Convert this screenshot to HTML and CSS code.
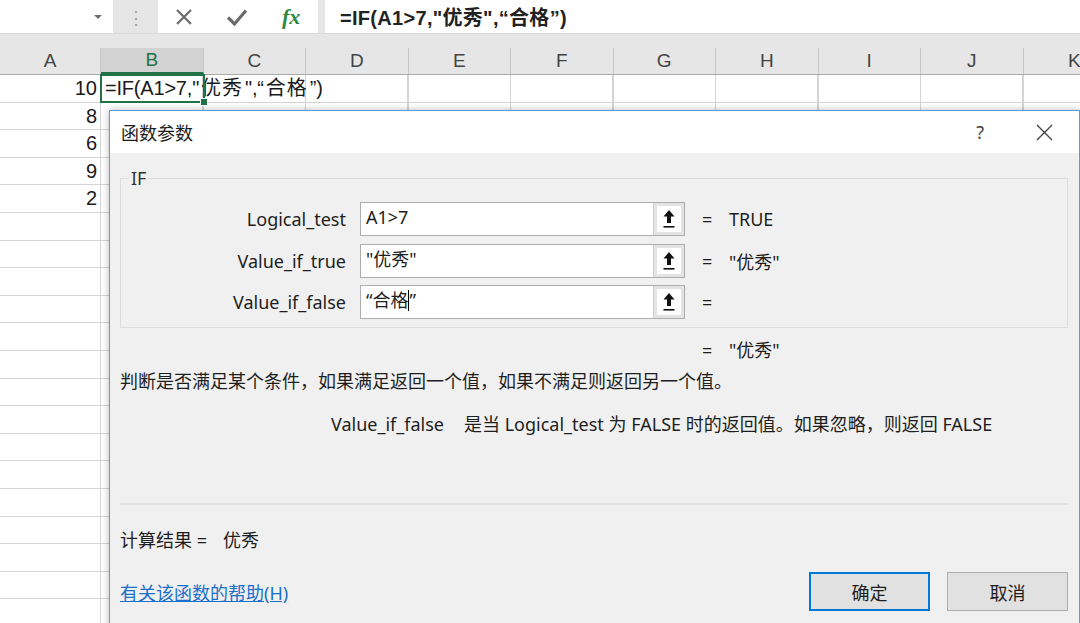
FILE: index.html
```html
<!DOCTYPE html>
<html lang="zh-CN">
<head>
<meta charset="utf-8">
<title>函数参数</title>
<link rel="stylesheet" href="styles.css">
</head>
<body>
<div class="app">
  <div class="fbar">
    <div class="namebox"><span class="dd"></span></div>
    <div class="grip">⋮</div>
    <div class="fbtns">
      <svg class="ico" width="20" height="20" viewBox="0 0 20 20"><path d="M3 3L17 17M17 3L3 17" stroke="#6b6b6b" stroke-width="2.2" fill="none"/></svg>
      <svg class="ico" width="22" height="20" viewBox="0 0 22 20"><path d="M2 10.5L8.5 17L20 3.5" stroke="#6b6b6b" stroke-width="3.2" fill="none"/></svg>
      <span class="fx">fx</span>
    </div>
    <div class="finput">=IF(A1&gt;7,"优秀",“合格”)</div>
  </div>
  <div class="fgap"></div>
  <div class="hdr">
    <div class="hc">A</div><div class="hc on">B</div><div class="hc">C</div><div class="hc">D</div><div class="hc">E</div><div class="hc">F</div><div class="hc">G</div><div class="hc">H</div><div class="hc">I</div><div class="hc">J</div><div class="hc">K</div>
  </div>
  <div class="rows">
    <div class="row"><div class="ca">10</div><div class="cb sel"><span class="ct">=IF(A1&gt;7,"<span class="cj">优秀</span>",“<span class="cj">合格</span>”)</span></div></div>
    <div class="row"><div class="ca">8</div><div class="cb"></div></div>
    <div class="row"><div class="ca">6</div><div class="cb"></div></div>
    <div class="row"><div class="ca">9</div><div class="cb"></div></div>
    <div class="row"><div class="ca">2</div><div class="cb"></div></div>
    <div class="row"><div class="ca"></div><div class="cb"></div></div>
    <div class="row"><div class="ca"></div><div class="cb"></div></div>
    <div class="row"><div class="ca"></div><div class="cb"></div></div>
    <div class="row"><div class="ca"></div><div class="cb"></div></div>
    <div class="row"><div class="ca"></div><div class="cb"></div></div>
    <div class="row"><div class="ca"></div><div class="cb"></div></div>
    <div class="row"><div class="ca"></div><div class="cb"></div></div>
    <div class="row"><div class="ca"></div><div class="cb"></div></div>
    <div class="row"><div class="ca"></div><div class="cb"></div></div>
    <div class="row"><div class="ca"></div><div class="cb"></div></div>
    <div class="row"><div class="ca"></div><div class="cb"></div></div>
    <div class="row"><div class="ca"></div><div class="cb"></div></div>
    <div class="row"><div class="ca"></div><div class="cb"></div></div>
    <div class="row"><div class="ca"></div><div class="cb"></div></div>
    <div class="row"><div class="ca"></div><div class="cb"></div></div>
  </div>

  <div class="dialog">
    <div class="dtitle">
      <span class="dname">函数参数</span>
      <span class="qm">?</span>
      <svg class="dclose" width="17" height="17" viewBox="0 0 17 17"><path d="M1 1L16 16M16 1L1 16" stroke="#444" stroke-width="1.4" fill="none"/></svg>
    </div>
    <div class="dbody">
      <fieldset class="grp">
        <legend>IF</legend>
        <div class="arg">
          <span class="lbl">Logical_test</span>
          <div class="inp"><span class="txt">A1&gt;7</span><span class="pick"><i><svg width="12" height="20" viewBox="0 0 12 20"><path d="M6 1L11.5 7.5H8V14H4V7.5H0.5Z" fill="#111"/><rect x="0.5" y="17" width="11" height="1.6" fill="#111"/></svg></i></span></div>
          <span class="eq">=</span><span class="val">TRUE</span>
        </div>
        <div class="arg">
          <span class="lbl">Value_if_true</span>
          <div class="inp"><span class="txt">"优秀"</span><span class="pick"><i><svg width="12" height="20" viewBox="0 0 12 20"><path d="M6 1L11.5 7.5H8V14H4V7.5H0.5Z" fill="#111"/><rect x="0.5" y="17" width="11" height="1.6" fill="#111"/></svg></i></span></div>
          <span class="eq">=</span><span class="val">"优秀"</span>
        </div>
        <div class="arg">
          <span class="lbl">Value_if_false</span>
          <div class="inp"><span class="txt">“合格<span class="caret"></span>”</span><span class="pick"><i><svg width="12" height="20" viewBox="0 0 12 20"><path d="M6 1L11.5 7.5H8V14H4V7.5H0.5Z" fill="#111"/><rect x="0.5" y="17" width="11" height="1.6" fill="#111"/></svg></i></span></div>
          <span class="eq">=</span><span class="val"></span>
        </div>
      </fieldset>
      <div class="result"><span class="eq">=</span><span class="val">"优秀"</span></div>
      <p class="desc">判断是否满足某个条件，如果满足返回一个值，如果不满足则返回另一个值。</p>
      <p class="detail"><span class="dk">Value_if_false</span><span>是当 Logical_test 为 FALSE 时的返回值。如果忽略，则返回 FALSE</span></p>
      <div class="sep"></div>
      <p class="calc">计算结果 =<span class="cv">优秀</span></p>
      <div class="foot">
        <a class="help" href="#">有关该函数的帮助(H)</a>
        <div class="btns">
          <button class="btn ok">确定</button>
          <button class="btn">取消</button>
        </div>
      </div>
    </div>
  </div>
</div>
</body>
</html>
```

FILE: styles.css
```css
* { box-sizing: border-box; }
html, body { margin: 0; padding: 0; overflow: hidden; }
body { font-family: "Noto Sans", "Noto Sans CJK SC", sans-serif; background: #fff; color: #1e1e1e; }

.app { position: relative; width: 1080px; height: 623px; overflow: hidden; background: #fff; }

/* formula bar */
.fbar { display: flex; height: 33px; background: #e6e6e6; }
.namebox { width: 113px; background: #fff; display: flex; align-items: center; justify-content: flex-end; padding-right: 11px; }
.dd { width: 0; height: 0; border-left: 4px solid transparent; border-right: 4px solid transparent; border-top: 4px solid #707070; }
.grip { width: 45px; display: flex; align-items: center; justify-content: center; color: #a0a0a0; font-size: 18px; }
.fbtns { width: 160px; background: #fff; display: flex; align-items: center; padding-left: 16px; gap: 32px; }
.fx { font-family: "Liberation Serif", serif; font-style: italic; font-weight: bold; color: #2d8a43; font-size: 22px; line-height: 1; margin-left: 2px; }
.finput { flex: 1; background: #fff; margin-left: 7px; padding-left: 15px; display: flex; align-items: center; font-family: "Liberation Sans", "Noto Sans CJK SC", sans-serif; font-weight: bold; font-size: 20px; color: #222; letter-spacing: 0.3px; }
.fgap { height: 15px; background: #e6e6e6; border-top: 1px solid #d9d9d9; }

/* column headers */
.hdr { display: grid; grid-template-columns: 101px repeat(10, 102.5px); height: 27px; background: #e6e6e6; border-bottom: 1px solid #a9a9a9; width: 1130px; }
.hc { border-right: 1px solid #c6c6c6; display: flex; align-items: center; justify-content: center; font-family: "Liberation Sans", sans-serif; font-size: 19px; color: #444; }
.hc.on { background: #d2d2d2; color: #217346; border-bottom: 2px solid #217346; }

/* grid rows */
.rows {
  background-image: repeating-linear-gradient(90deg, #d4d4d4 0 1px, transparent 1px 102.5px);
  background-position: 100px 0;
  background-repeat: no-repeat;
}
.row { display: grid; grid-template-columns: 101px 102.5px; height: 27.6px; border-bottom: 1px solid #d4d4d4; font-family: "Liberation Sans", "Noto Sans CJK SC", sans-serif; font-size: 20px; color: #1a1a1a; }
.ca { text-align: right; padding-right: 4px; line-height: 27px; }
.cb { white-space: nowrap; line-height: 27px; padding-left: 4px; position: relative; }
.cb.sel { outline: 2px solid #217346; outline-offset: -1px; z-index: 1; }
.cb.sel::after { content: ""; position: absolute; right: -4px; bottom: -4px; width: 6px; height: 6px; background: #217346; border: 1px solid #fff; }
.ct { letter-spacing: -0.2px; }
.cj { letter-spacing: 1px; margin: 0 2px; }

/* dialog */
.dialog { position: absolute; left: 109px; top: 110px; width: 971px; height: 530px; background: #f0f0f0; border: 1px solid #5a9bd8; box-shadow: 0 0 7px rgba(0,0,0,0.28); z-index: 5; }
.dtitle { height: 42px; background: #fff; display: flex; align-items: center; padding-left: 11px; font-size: 18px; color: #1e1e1e; }
.dname { flex: 1; }
.qm { font-size: 18px; color: #444; margin-right: 52px; }
.dclose { margin-right: 26px; }

.dbody { padding: 0 11px 0 10px; font-size: 18px; }
.grp { margin: 13px 0 0 0; padding: 12px 0 8px 0; border: 1px solid #dcdcdc; min-width: 0; }
.grp legend { margin-left: 8px; padding: 0 2px; line-height: 24px; font-size: 18px; color: #333; }
.arg { display: flex; align-items: center; height: 34px; margin-bottom: 7.5px; }
.arg:last-child { margin-bottom: 0; }
.lbl { width: 225px; text-align: right; margin-right: 14px; }
.inp { width: 325px; height: 34px; display: flex; border: 1px solid #adadad; background: #fff; }
.txt { flex: 1; padding: 2px 0 0 5px; line-height: 24px; white-space: nowrap; }
.caret { display: inline-block; width: 1px; height: 21px; background: #000; vertical-align: -4px; }
.pick { width: 31px; background: #e3e3e3; border-left: 1px solid #cfcfcf; padding: 3px; display: flex; }
.pick i { flex: 1; background: #fff; display: flex; align-items: center; justify-content: center; }
.eq { margin-left: 17px; width: 10px; text-align: center; }
.val { margin-left: 17px; }

.result { display: flex; align-items: center; margin-top: 10px; line-height: 24px; padding-left: 565px; }
.desc { margin: 7px 0 0 0; line-height: 24px; }
.detail { margin: 19px 0 0 0; line-height: 24px; padding-left: 211px; display: flex; gap: 20px; }
.sep { margin-top: 67px; height: 2px; background: #e3e3e3; }
.calc { margin: 23px 0 0 0; line-height: 24px; }
.cv { margin-left: 16px; }
.foot { display: flex; align-items: center; justify-content: space-between; margin-top: 20px; }
.help { color: #1a6fc9; text-decoration: underline; font-size: 18px; }
.btns { display: flex; gap: 17px; }
.btn { width: 121px; height: 39px; background: #e1e1e1; border: 1px solid #adadad; font-family: "Noto Sans", "Noto Sans CJK SC", sans-serif; font-size: 18px; color: #1e1e1e; padding: 0; }
.btn.ok { border: 2px solid #0078d7; }
```
